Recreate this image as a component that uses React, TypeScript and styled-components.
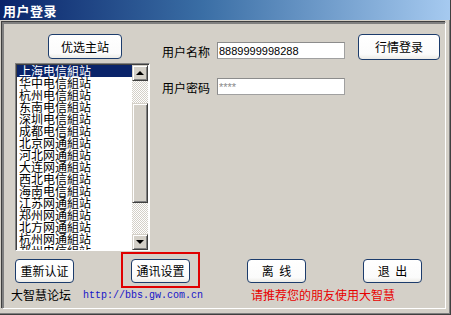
import React from 'react';
import styled, { createGlobalStyle } from 'styled-components';

const GlobalStyle = createGlobalStyle`
  html, body { margin: 0; padding: 0; background: #d4d0c8; }
  body { font-family: "Noto Sans CJK SC", "Liberation Sans", sans-serif; }
  * { box-sizing: border-box; }
`;

const stations = [
  '上海电信組站', '华中电信組站', '杭州电信組站', '东南电信組站',
  '深圳电信組站', '成都电信組站', '北京网通組站', '河北网通組站',
  '大连网通組站', '西北电信組站', '海南电信組站', '江苏网通組站',
  '郑州网通組站', '北方网通組站', '杭州网通組站', '郑州电信組站',
];

const Window = styled.div`
  width: 451px;
  height: 315px;
  display: flex;
  flex-direction: column;
  background: #d4d0c8;
  border-right: 1px solid #404040;
  border-bottom: 1px solid #404040;
  box-shadow: inset -1px -1px #808080;
`;

const TitleBar = styled.div`
  height: 20px;
  padding-left: 3px;
  display: flex;
  align-items: center;
  background: linear-gradient(to right, #0a246a, #3a6ea5 45%, #a6caf0);
  color: #fff;
  font-weight: bold;
  font-size: 13px;
  letter-spacing: 0.5px;
`;

const Panel = styled.div`
  flex: 1;
  margin: 2px 4px 5px 2px;
  padding: 11px 0 0 12px;
  border-top: 1px solid #808080;
  border-left: 1px solid #808080;
  border-right: 1px solid #fff;
  border-bottom: 1px solid #fff;
  box-shadow: 1px 1px 0 #808080 inset, -1px -1px 0 #404040;
`;

const TopArea = styled.div`
  display: flex;
  align-items: flex-start;
`;

const LeftCol = styled.div`
  width: 135px;
  display: flex;
  flex-direction: column;
`;

const Button = styled.button<{ $w: number; $h: number }>`
  width: ${p => p.$w}px;
  height: ${p => p.$h}px;
  padding: 0;
  border: 1px solid #1c3c6c;
  border-radius: 4px;
  background: linear-gradient(#ffffff, #fbfbfb 80%, #ecebe6);
  color: #000;
  font-family: "Noto Sans CJK SC", sans-serif;
  font-size: 12px;
  line-height: 1;
  white-space: pre;
`;

const StationButton = styled(Button)`
  margin-left: 33px;
`;

const ListBox = styled.div`
  margin-top: 4px;
  height: 188px;
  display: flex;
  background: #fff;
  border-top: 1px solid #808080;
  border-left: 1px solid #808080;
  border-right: 1px solid #fff;
  border-bottom: 1px solid #fff;
  box-shadow: inset 1px 1px #404040;
`;

const Items = styled.div`
  flex: 1;
  padding: 1px 0 0 1px;
  overflow: hidden;
`;

const Item = styled.div<{ $sel?: boolean }>`
  height: 12px;
  line-height: 12px;
  padding-left: 2px;
  font-size: 12px;
  white-space: nowrap;
  color: ${p => (p.$sel ? '#fff' : '#000')};
  background: ${p => (p.$sel ? '#0a246a' : 'transparent')};
`;

const ScrollBar = styled.div`
  width: 16px;
  margin: 1px 1px 0 0;
  display: flex;
  flex-direction: column;
`;

const ScrollBtn = styled.div`
  height: 16px;
  display: flex;
  align-items: center;
  justify-content: center;
  background: #d4d0c8;
  border-top: 1px solid #d4d0c8;
  border-left: 1px solid #d4d0c8;
  border-right: 1px solid #404040;
  border-bottom: 1px solid #404040;
  box-shadow: inset 1px 1px #fff, inset -1px -1px #808080;
`;

const Track = styled.div<{ $h: number }>`
  height: ${p => p.$h}px;
  background: repeating-conic-gradient(#d4d0c8 0 25%, #fff 0 50%) 0 0 / 2px 2px;
`;

const Thumb = styled(ScrollBtn)<{ $h: number }>`
  height: ${p => p.$h}px;
`;

const Arrow = styled.div<{ $up?: boolean }>`
  width: 0;
  height: 0;
  border-left: 4px solid transparent;
  border-right: 4px solid transparent;
  ${p => (p.$up ? 'border-bottom: 4px solid #000;' : 'border-top: 4px solid #000;')}
`;

const Fields = styled.div`
  margin-left: 12px;
  padding-top: 8px;
  display: flex;
  flex-direction: column;
  gap: 19px;
`;

const FieldRow = styled.div`
  display: flex;
  align-items: center;
  height: 17px;
`;

const Label = styled.span`
  width: 55px;
  font-size: 12px;
  color: #000;
  padding-top: 2px;
`;

const Input = styled.input<{ $dim?: boolean }>`
  width: 128px;
  height: 17px;
  padding: 0 0 0 1px;
  border: 1px solid #a0a0a0;
  border-top-color: #8c8c8c;
  border-left-color: #8c8c8c;
  background: #fff;
  font-family: "Liberation Sans", sans-serif;
  font-size: 11px;
  color: ${p => (p.$dim ? '#8a8a8a' : '#000')};
  outline: none;
`;

const LoginButton = styled(Button)`
  margin-left: 13px;
`;

const ActionRow = styled.div`
  margin-top: 8px;
  display: flex;
  gap: 57px;
`;

const Highlight = styled.div`
  position: relative;
  display: flex;
  &::after {
    content: '';
    position: absolute;
    inset: -7px -10px -5px -10px;
    border: 2px solid #e00000;
    pointer-events: none;
  }
`;

const Footer = styled.div`
  margin: 4px 0 0 -4px;
  display: flex;
  align-items: center;
  height: 14px;
`;

const Forum = styled.span`
  width: 72px;
  font-size: 12px;
  color: #000;
`;

const Url = styled.span`
  width: 168px;
  font-family: "Liberation Mono", monospace;
  font-size: 10px;
  color: #1414c8;
  padding-top: 2px;
`;

const Promo = styled.span`
  font-size: 12px;
  color: #e80000;
`;

export default function App() {
  return (
    <>
      <GlobalStyle />
      <Window>
        <TitleBar>用户登录</TitleBar>
        <Panel>
          <TopArea>
            <LeftCol>
              <StationButton $w={74} $h={25}>优选主站</StationButton>
              <ListBox>
                <Items>
                  {stations.map((s, i) => (
                    <Item key={i} $sel={i === 0}>{s}</Item>
                  ))}
                </Items>
                <ScrollBar>
                  <ScrollBtn><Arrow $up /></ScrollBtn>
                  <Track $h={22} />
                  <Thumb $h={101} />
                  <Track $h={31} />
                  <ScrollBtn><Arrow /></ScrollBtn>
                </ScrollBar>
              </ListBox>
            </LeftCol>
            <Fields>
              <FieldRow>
                <Label>用户名称</Label>
                <Input readOnly defaultValue="8889999998288" />
              </FieldRow>
              <FieldRow>
                <Label>用户密码</Label>
                <Input readOnly $dim defaultValue="****" />
              </FieldRow>
            </Fields>
            <LoginButton $w={82} $h={26}>行情登录</LoginButton>
          </TopArea>
          <ActionRow>
            <Button $w={59} $h={24}>重新认证</Button>
            <Highlight>
              <Button $w={59} $h={24}>通讯设置</Button>
            </Highlight>
            <Button $w={59} $h={24}>{'离  线'}</Button>
            <Button $w={59} $h={24}>{'退  出'}</Button>
          </ActionRow>
          <Footer>
            <Forum>大智慧论坛</Forum>
            <Url>http://bbs.gw.com.cn</Url>
            <Promo>请推荐您的朋友使用大智慧</Promo>
          </Footer>
        </Panel>
      </Window>
    </>
  );
}
